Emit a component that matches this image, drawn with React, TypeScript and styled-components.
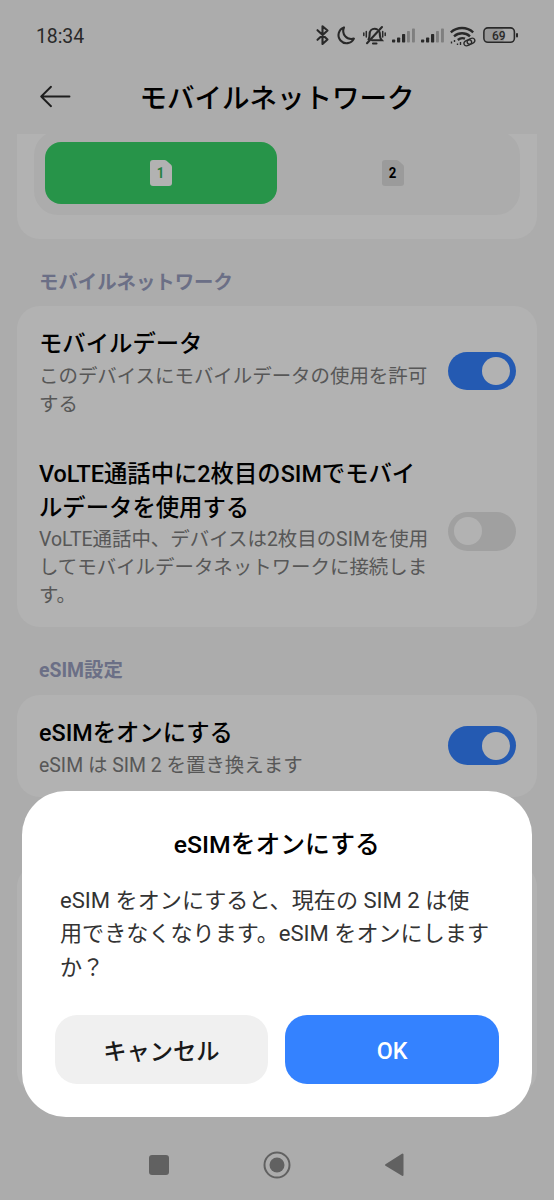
import React from "react";
import styled, { createGlobalStyle } from "styled-components";

const GlobalStyle = createGlobalStyle`
  * { box-sizing: border-box; }
  body {
    margin: 0;
    background: #f7f7f7;
    font-family: Roboto, "Noto Sans CJK JP", sans-serif;
  }
`;

const Screen = styled.div`
  position: relative;
  width: 554px;
  height: 1200px;
  overflow: hidden;
  display: flex;
  flex-direction: column;
  background: #f7f7f7;
  color: #000;
`;

const StatusBar = styled.div`
  flex: none;
  height: 70px;
  padding: 0 35px 0 36px;
  display: flex;
  align-items: center;
  justify-content: space-between;
  color: #3c3c3c;
`;

const Clock = styled.span`
  font-size: 19.5px;
  line-height: 24px;
  letter-spacing: -0.1px;
  padding-top: 3px;
`;

const AppBar = styled.header`
  flex: none;
  height: 64px;
  padding: 0 40px 6px;
  display: grid;
  grid-template-columns: 40px 1fr 40px;
  align-items: center;
`;

const BackButton = styled.button`
  height: 24px;
  margin-bottom: 7px;
  padding: 0;
  border: 0;
  background: none;
  display: flex;
`;

const PageTitle = styled.h1`
  margin: 0;
  font-size: 27.5px;
  font-weight: 500;
  line-height: 40px;
  text-align: center;
  white-space: nowrap;
`;

const Content = styled.main`
  flex: 1;
  min-height: 0;
  overflow: hidden;
  padding: 0 17px;
`;

const Card = styled.section<{ $height: number }>`
  height: ${(p) => p.$height}px;
  border-radius: 23px;
  background: #fff;
`;

const SimCard = styled(Card)`
  padding: 0 17px;
  border-radius: 0 0 23px 23px;
`;

const Segments = styled.div`
  flex: none;
  height: 84px;
  padding: 11px;
  display: flex;
  border-radius: 24px;
  background: #f7f7f7;
`;

const SimClip = styled.div`
  height: 81px;
  overflow: hidden;
  display: flex;
  flex-direction: column;
  justify-content: flex-end;
`;

const Segment = styled.button<{ $active?: boolean }>`
  flex: 1;
  padding: 0;
  border: 0;
  border-radius: 16px;
  display: flex;
  align-items: center;
  justify-content: center;
  background: ${(p) => (p.$active ? "#39d569" : "transparent")};
`;

const SectionLabel = styled.h2<{ $height?: number }>`
  margin: 0;
  height: ${(p) => p.$height ?? 67}px;
  padding: 30px 22px 0;
  font-size: 19.4px;
  line-height: 28px;
  font-weight: 700;
  color: #9aa0c0;
`;

const Row = styled.div<{ $height: number }>`
  height: ${(p) => p.$height}px;
  padding: 22px 21.5px 0 22px;
  display: flex;
  justify-content: space-between;
`;

const RowText = styled.div`
  width: 400px;
  white-space: pre;
`;

const RowTitle = styled.h3`
  margin: 0 0 1px;
  font-size: 23.35px;
  line-height: 33.5px;
  font-weight: 500;
`;

const RowNote = styled.p`
  margin: 0;
  font-size: 19.45px;
  line-height: 28px;
  color: #7d7d7d;
`;

const Switch = styled.span<{ $on?: boolean; $offset: number }>`
  flex: none;
  width: 67.5px;
  height: 38.5px;
  margin-top: ${(p) => p.$offset}px;
  padding: 0 5.5px;
  border-radius: 20px;
  display: flex;
  align-items: center;
  justify-content: ${(p) => (p.$on ? "flex-end" : "flex-start")};
  background: ${(p) => (p.$on ? "#3482ff" : "#e6e6e6")};

  &::before {
    content: "";
    width: 28px;
    height: 28px;
    border-radius: 50%;
    background: #fff;
  }
`;

const NavBar = styled.nav`
  flex: none;
  height: 70px;
  padding-right: 4px;
  display: flex;
  align-items: center;
  justify-content: center;
`;

const Scrim = styled.div`
  position: absolute;
  inset: 0;
  padding: 0 22px 83px;
  display: flex;
  align-items: flex-end;
  background: rgba(0, 0, 0, 0.3);
`;

const Dialog = styled.div`
  width: 510px;
  height: 326.5px;
  padding: 36px 33px 33px 32.5px;
  border-radius: 44px;
  display: flex;
  flex-direction: column;
  background: #fff;
`;

const DialogTitle = styled.h2`
  margin: 0;
  font-size: 24.8px;
  line-height: 36px;
  font-weight: 500;
  text-align: center;
`;

const DialogBody = styled.p`
  margin: 21px 0 0 5.5px;
  font-size: 22.1px;
  line-height: 33.5px;
  white-space: pre;
  color: #333;
`;

const DialogActions = styled.div`
  margin-top: auto;
  display: flex;
  gap: 17px;
`;

const DialogButton = styled.button<{ $primary?: boolean }>`
  flex: 1;
  height: 69px;
  padding: ${(p) => (p.$primary ? 3 : 4)}px 0 0;
  border: 0;
  border-radius: 22px;
  font: 500 23.3px/34px Roboto, "Noto Sans CJK JP", sans-serif;
  color: ${(p) => (p.$primary ? "#fff" : "#191919")};
  background: ${(p) => (p.$primary ? "#3482ff" : "#f0f0f0")};
`;

const SimNumber = styled.text`
  font: 700 15px Roboto, sans-serif;
  text-anchor: middle;
`;

const BatteryText = styled.text`
  font: 500 12px Roboto, sans-serif;
  text-anchor: middle;
`;

function SimIcon({ n, fill, ink }: { n: number; fill: string; ink: string }) {
  return (
    <svg width="24" height="28" viewBox="0 0 24 28">
      <path
        d="M4 1h11.500c.8 0 1.400.3 2 .8l4.500 4c.6.6 1 1.300 1 2.200V24a3 3 0 0 1-3 3H4a3 3 0 0 1-3-3V4a3 3 0 0 1 3-3z"
        fill={fill}
      />
      <SimNumber x="13.200" y="19.300" fill={ink} transform="scale(.88 1)">
        {n}
      </SimNumber>
    </svg>
  );
}

function StatusIcons() {
  return (
    <svg width="206" height="26" viewBox="313 22 206 26" fill="none" stroke="#3c3c3c">
      <path d="M317.500 30.200l10 9.300-5 4.500V26.200l5 4.300-10 9.300" strokeWidth="2.100" strokeLinejoin="round" strokeLinecap="round" />
      <path d="M344 27.400a8.100 8.100 0 1 0 9.900 11.200c-7.600 2-12.500-4.900-9.900-11.200z" strokeWidth="2.100" strokeLinejoin="round" />
      <g strokeWidth="2.100" strokeLinecap="round">
        <path d="M368.500 39.500c1.200-1.700 1.100-3 1.100-5.300 0-3.500 2.200-5.500 5-5.500 1 0 2 .3 2.700.8M379.500 32c.3 1 .4 2 .4 3.200 0 2.300.5 3.400 1.900 5H372" />
        <path d="M373 43.500h3.500M382 27L367 43.200" />
        <path d="M366.300 31.500v5.500M363.800 33v2.500M382.700 31.500v5.500M385.200 33v2.500" strokeWidth="1.500" />
      </g>
      {[392, 421].map((x) => (
        <g key={x} fill="#3c3c3c" stroke="none">
          <rect x={x} y="39.500" width="3.200" height="3" rx=".7" />
          <rect x={x + 5} y="37.500" width="3.200" height="5" rx=".7" />
          <rect x={x + 10} y="34" width="3.200" height="8.500" rx=".7" />
          <rect x={x + 15} y="31" width="2.900" height="11.500" rx=".7" opacity=".35" />
          <rect x={x + 20} y="28.500" width="2.900" height="14" rx=".7" opacity=".35" />
        </g>
      ))}
      <g strokeWidth="2.400">
        <path d="M450.800 32.300c6.500-5.700 16-5.700 22.400 0" />
        <path d="M454 36.300c4.800-4 11.400-4 16 0" />
        <path d="M457.800 40c2.200-1.900 5-2.200 7.200-1.300" />
      </g>
      <g strokeWidth="1.400">
        <path d="M451.500 41.500v2M454.500 40v2M457.500 43.500v1.500M460.500 42v3" />
        <ellipse cx="467.800" cy="42.800" rx="4" ry="2.600" transform="rotate(-25 467.800 42.800)" />
        <ellipse cx="471" cy="41.200" rx="4" ry="2.600" transform="rotate(-25 471 41.200)" />
      </g>
      <rect x="485" y="29" width="19" height="13" rx="2.500" fill="#3c3c3c" opacity=".14" stroke="none" />
      <rect x="483.900" y="27.900" width="30.500" height="14.400" rx="4" strokeWidth="1.600" />
      <path d="M517 34v2.500" strokeWidth="2" strokeLinecap="round" />
      <BatteryText x="498.700" y="39.500" fill="#3c3c3c" stroke="none">
        69
      </BatteryText>
    </svg>
  );
}

export default function App() {
  return (
    <>
      <GlobalStyle />
      <Screen>
        <StatusBar>
          <Clock>18:34</Clock>
          <StatusIcons />
        </StatusBar>
        <AppBar>
          <BackButton aria-label="戻る">
            <svg width="32" height="24" viewBox="0 0 32 24" fill="none" stroke="#2b2b2b" strokeWidth="1.900" strokeLinecap="round" strokeLinejoin="round">
              <path d="M29.500 12.500H1.200M11 2.800L1.200 12.500 11 22.200" />
            </svg>
          </BackButton>
          <PageTitle>モバイルネットワーク</PageTitle>
        </AppBar>
        <Content>
          <SimCard $height={105}>
            <SimClip>
              <Segments>
                <Segment $active>
                  <SimIcon n={1} fill="#fff" ink="#39b95f" />
                </Segment>
                <Segment>
                  <SimIcon n={2} fill="#dedede" ink="#000" />
                </Segment>
              </Segments>
            </SimClip>
          </SimCard>
          <SectionLabel>モバイルネットワーク</SectionLabel>
          <Card $height={321}>
            <Row $height={130}>
              <RowText>
                <RowTitle>モバイルデータ</RowTitle>
                <RowNote>{"このデバイスにモバイルデータの使用を許可\nする"}</RowNote>
              </RowText>
              <Switch $on $offset={23.5} />
            </Row>
            <Row $height={191}>
              <RowText>
                <RowTitle>{"VoLTE通話中に2枚目のSIMでモバイ\nルデータを使用する"}</RowTitle>
                <RowNote>{"VoLTE通話中、デバイスは2枚目のSIMを使用\nしてモバイルデータネットワークに接続しま\nす。"}</RowNote>
              </RowText>
              <Switch $offset={54.2} />
            </Row>
          </Card>
          <SectionLabel $height={68}>eSIM設定</SectionLabel>
          <Card $height={102}>
            <Row $height={102}>
              <RowText>
                <RowTitle>eSIMをオンにする</RowTitle>
                <RowNote>eSIM は SIM 2 を置き換えます</RowNote>
              </RowText>
              <Switch $on $offset={9.3} />
            </Row>
          </Card>
          <SectionLabel />
          <Card $height={230} />
        </Content>
        <NavBar>
          <svg width="260" height="32" viewBox="145 1149 260 32" fill="#8c8c8c">
            <rect x="149" y="1155" width="20" height="20" rx="3" />
            <circle cx="277" cy="1165" r="12.500" fill="none" stroke="#8c8c8c" strokeWidth="2" />
            <circle cx="277" cy="1165" r="7.500" />
            <path d="M402.500 1154.500v20.500L386 1165z" stroke="#8c8c8c" strokeWidth="2" strokeLinejoin="round" />
          </svg>
        </NavBar>
        <Scrim>
          <Dialog role="dialog">
            <DialogTitle>eSIMをオンにする</DialogTitle>
            <DialogBody>{"eSIM をオンにすると、現在の SIM 2 は使\n用できなくなります。eSIM をオンにします\nか？"}</DialogBody>
            <DialogActions>
              <DialogButton>キャンセル</DialogButton>
              <DialogButton $primary>OK</DialogButton>
            </DialogActions>
          </Dialog>
        </Scrim>
      </Screen>
    </>
  );
}
